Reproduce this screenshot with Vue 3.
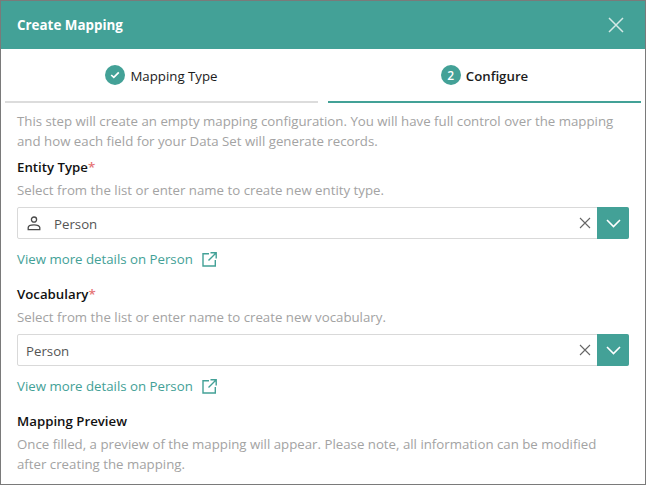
<script setup>
const fields = [
  { label: 'Entity Type', help: 'Select from the list or enter name to create new entity type.', icon: true },
  { label: 'Vocabulary', help: 'Select from the list or enter name to create new vocabulary.', icon: false },
]
</script>

<template>
  <div class="window">
    <header class="header">
      <h1 class="title">Create Mapping</h1>
      <svg class="close" width="16" height="16" viewBox="0 0 16 16"><path d="M1 1 15 15M15 1 1 15" stroke="#d4e9e6" stroke-width="1.5" fill="none"/></svg>
    </header>
    <nav class="steps">
      <div class="step">
        <span class="badge">
          <svg width="10" height="8" viewBox="0 0 10 8"><path d="M1.2 4 3.8 6.4 8.8 1.4" stroke="#fff" stroke-width="1.7" fill="none"/></svg>
        </span>
        <span class="step-name">Mapping Type</span>
      </div>
      <div class="step active">
        <span class="badge">2</span>
        <span class="step-name">Configure</span>
      </div>
    </nav>
    <main class="body">
      <p class="muted intro">This step will create an empty mapping configuration. You will have full control over the mapping and how each field for your Data Set will generate records.</p>
      <section v-for="f in fields" :key="f.label" class="field">
        <div class="label">{{ f.label }}<span class="req">*</span></div>
        <p class="muted help">{{ f.help }}</p>
        <div class="select">
          <svg v-if="f.icon" class="person" width="14" height="15" viewBox="0 0 14 15"><circle cx="7" cy="3.6" r="2.6" fill="none" stroke="#4a4a4a" stroke-width="1.3"/><path d="M1.2 13.6V11.6C1.2 9.9 3.5 8.8 7 8.8S12.8 9.9 12.8 11.6V13.6Z" fill="none" stroke="#4a4a4a" stroke-width="1.3"/></svg>
          <span class="value" :class="{ 'with-icon': f.icon }">Person</span>
          <svg class="clear" width="12" height="12" viewBox="0 0 12 12"><path d="M1 1 11 11M11 1 1 11" stroke="#666" stroke-width="1.1" fill="none"/></svg>
          <span class="toggle">
            <svg width="15" height="9" viewBox="0 0 15 9"><path d="M1 1 7.5 7.5 14 1" stroke="#fff" stroke-width="1.6" fill="none"/></svg>
          </span>
        </div>
        <a class="link">View more details on Person
          <svg width="15" height="15" viewBox="0 0 15 15"><path d="M7 1.7H1V14H13.3V8M8.5 .8H14.2V6.5M14 1 6.5 8.5" stroke="#43a197" stroke-width="1.4" fill="none"/></svg>
        </a>
      </section>
      <div class="label">Mapping Preview</div>
      <p class="muted help-last">Once filled, a preview of the mapping will appear. Please note, all information can be modified after creating the mapping.</p>
    </main>
  </div>
</template>

<style>
html, body { margin: 0; background: #fff; }
</style>

<style scoped>
.window {
  box-sizing: border-box;
  width: 646px;
  height: 485px;
  border: 1px solid #7a7a7a;
  overflow: hidden;
  background: #fff;
  font-family: "Open Sans", "Noto Sans", sans-serif;
  font-size: 13.25px;
  color: #1c1c1c;
}
.header {
  height: 48px;
  background: #43a197;
  display: flex;
  align-items: center;
  justify-content: space-between;
  padding: 0 21px 0 16px;
}
.title { margin: 0; color: #fff; font-size: 13.4px; font-weight: 700; }
.steps {
  display: grid;
  grid-template-columns: 1fr 1fr;
  gap: 10px;
  padding: 0 4px;
}
.step {
  height: 52px;
  display: flex;
  align-items: center;
  justify-content: center;
  gap: 5px;
  border-bottom: 2px solid #dcdcdc;
}
.step.active { border-bottom-color: #43a197; }
.step-name { margin-top: 2px; }
.badge {
  width: 20px;
  height: 20px;
  border-radius: 50%;
  background: #43a197;
  color: #fff;
  font-size: 12px;
  font-weight: 600;
  display: flex;
  align-items: center;
  justify-content: center;
}
.step.active .step-name { font-weight: 600; }
.body { padding: 8px 16px 0; }
p { margin: 0; }
.muted { color: #a3a3a3; line-height: 20px; }
.label { font-weight: 600; line-height: 20px; color: #111; }
.req { color: #e57373; }
.intro { margin-bottom: 6px; }
.field { margin-bottom: 15px; }
.help { margin-top: 3px; }
.select {
  margin-top: 7px;
  height: 32px;
  box-sizing: border-box;
  border: 1px solid #d9d9d9;
  border-radius: 2px;
  display: flex;
  align-items: center;
}
.person { margin-left: 9px; }
.value { flex: 1; margin-left: 8px; padding-top: 2px; color: #555; }
.value.with-icon { margin-left: 13px; }
.clear { margin-right: 6px; }
.toggle {
  width: 32px;
  height: 32px;
  margin: -1px -1px -1px 0;
  background: #43a197;
  border-radius: 0 2px 2px 0;
  display: flex;
  align-items: center;
  justify-content: center;
}
.link {
  margin-top: 10px;
  display: flex;
  align-items: center;
  gap: 9px;
  color: #43a197;
  line-height: 20px;
}
.help-last { margin-top: 3px; }
</style>
